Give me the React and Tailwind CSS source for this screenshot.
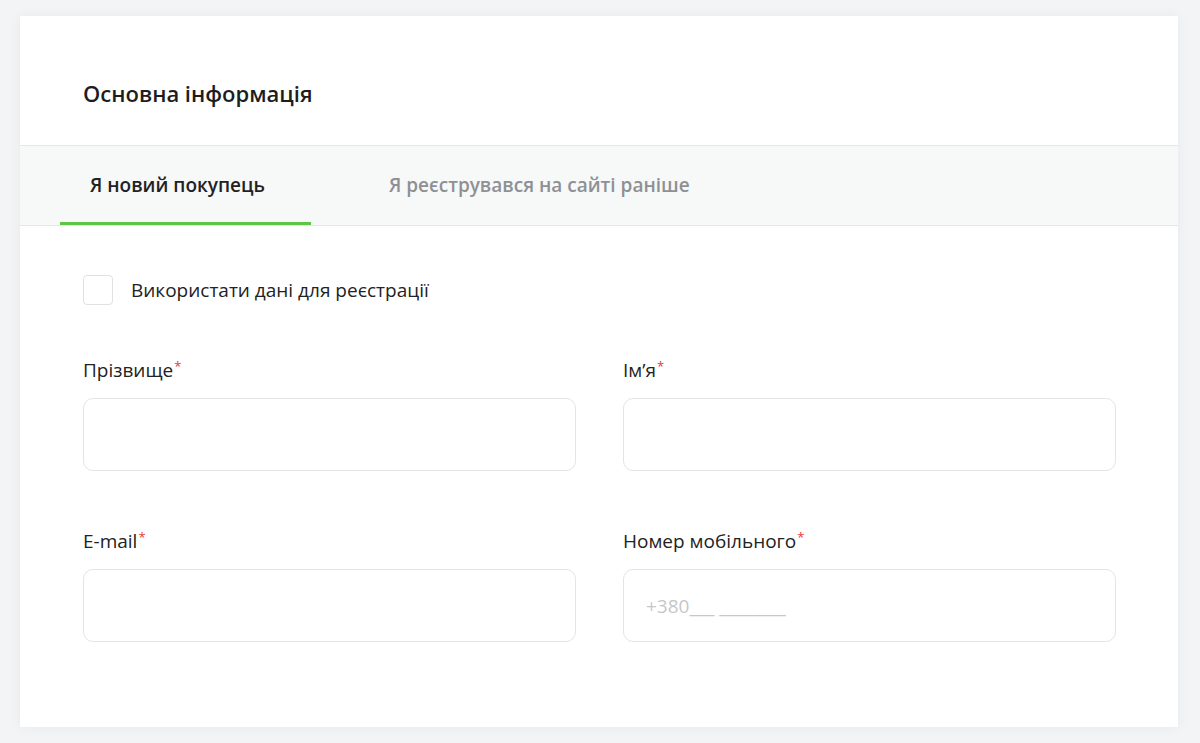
import React from 'react';

function Field({ label, placeholder }) {
  return (
    <div className="flex flex-col">
      <label className="text-[19px] text-[#222] h-[27px] leading-[27px]">
        {label}
        <sup className="text-[#e53935] text-[13px] ml-[1px]">*</sup>
      </label>
      <input
        className="mt-[14px] h-[73px] rounded-[10px] border border-[#e3e4e6] px-[22px] text-[19px] outline-none placeholder:text-[#c5c7ca]"
        placeholder={placeholder}
      />
    </div>
  );
}

export default function App() {
  return (
    <div className="min-h-[743px] bg-[#f3f4f6] pt-4 pl-5 pr-[22px] pb-4" style={{ fontFamily: '"Open Sans", "Noto Sans", sans-serif' }}>
      <div className="bg-white h-[711px] shadow-[0_0_12px_rgba(0,0,0,0.05)]">
        {/* Заголовок */}
        <div className="h-[130px] border-b border-[#e6e7e9] px-[63px] pt-[60px]">
          <h2 className="text-[22px] leading-[34px] font-semibold text-[#1d1d1f]">Основна інформація</h2>
        </div>
        {/* Вкладки */}
        <div className="h-[80px] bg-[#f7f8f8] border-b border-[#e6e7e9] flex pl-10">
          <button className="w-[251px] h-full flex items-center pl-[30px] text-[19px] font-semibold text-[#222] border-b-[3px] border-[#5ec447] pt-[3px]">
            Я новий покупець
          </button>
          <button className="h-full flex items-center pl-[78px] text-[19px] font-semibold text-[#8e9094]">
            Я реєструвався на сайті раніше
          </button>
        </div>
        {/* Форма */}
        <div className="px-[63px] pt-[49px]">
          <label className="flex items-center gap-[18px]">
            <span className="w-[30px] h-[30px] rounded-[4px] border border-[#e0e1e3]" />
            <span className="text-[19px] text-[#222]">Використати дані для реєстрації</span>
          </label>
          <div className="grid grid-cols-2 gap-x-[47px] gap-y-[57px] mt-[52px] w-[1033px]">
            <Field label="Прізвище" />
            <Field label="Ім’я" />
            <Field label="E-mail" />
            <Field label="Номер мобільного" placeholder="+380___ ________" />
          </div>
        </div>
      </div>
    </div>
  );
}
